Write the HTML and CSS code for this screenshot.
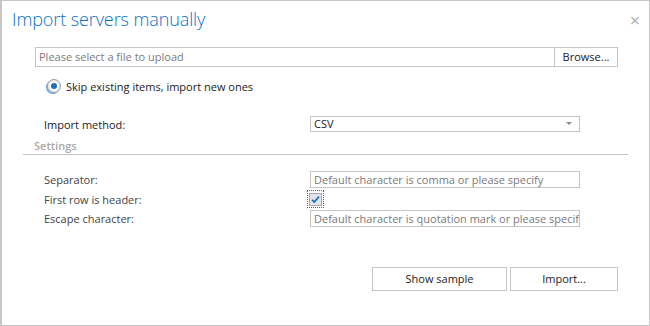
FILE: index.html
```html
<!doctype html>
<html>
<head>
<meta charset="utf-8">
<link rel="stylesheet" href="styles.css">
</head>
<body>
<div class="dialog">
  <div class="dialog-head">
    <h1 class="dialog-title">Import servers manually</h1>
    <span class="dialog-close">&#215;</span>
  </div>
  <div class="dialog-body">
    <div class="upload">
      <span class="upload-field">Please select a file to upload</span>
      <span class="upload-btn">Browse...</span>
    </div>
    <label class="radio-row">
      <span class="radio"><span class="radio-dot"></span></span>
      <span>Skip existing items, import new ones</span>
    </label>
    <div class="form-row method">
      <span class="form-label">Import method:</span>
      <span class="select">CSV<span class="select-arrow"></span></span>
    </div>
    <div class="section-head">Settings</div>
    <div class="settings">
      <div class="form-row">
        <span class="form-label">Separator:</span>
        <span class="text-field">Default character is comma or please specify</span>
      </div>
      <div class="form-row">
        <span class="form-label">First row is header:</span>
        <span class="check">
          <svg width="13" height="13" viewBox="0 0 13 13">
            <rect x="0.5" y="0.5" width="12" height="12" fill="#e4e4e4" stroke="#a8a8a8"/>
            <path d="M3 6.8 L5.3 9 L10 3.6" fill="none" stroke="#1a6fc4" stroke-width="1.8"/>
          </svg>
        </span>
      </div>
      <div class="form-row">
        <span class="form-label">Escape character:</span>
        <span class="text-field">Default character is quotation mark or please specif</span>
      </div>
    </div>
    <div class="actions">
      <span class="btn btn-sample">Show sample</span>
      <span class="btn btn-import">Import...</span>
    </div>
  </div>
</div>
</body>
</html>
```

FILE: styles.css
```css
body {
  margin: 0;
  font-family: "Open Sans", "Noto Sans", sans-serif;
  font-size: 11px;
  color: #333;
}
.dialog {
  box-sizing: border-box;
  width: 650px;
  height: 326px;
  border: 1px solid #c6c6c6;
  border-left-width: 2px;
  background: #fff;
}
/* titre */
.dialog-head {
  display: flex;
  justify-content: space-between;
  align-items: flex-start;
  height: 45px;
  padding: 0 9px 0 10px;
}
.dialog-title {
  margin: 6px 0 0 0;
  font-size: 18px;
  line-height: 24px;
  font-weight: 300;
  color: #0a72c4;
  letter-spacing: -0.1px;
}
.dialog-close {
  margin-top: 10px;
  font-size: 18px;
  color: #b0b0b0;
  line-height: 18px;
}
.dialog-body {
  padding: 0 21px;
}
/* upload */
.upload {
  display: flex;
  height: 20px;
  margin: 1px 10px 0 12px;
  border: 1px solid #c6c6c6;
  box-sizing: border-box;
}
.upload-field {
  flex: 1;
  padding-left: 3px;
  line-height: 18px;
  color: #7a7a7a;
}
.upload-btn {
  width: 62px;
  border-left: 1px solid #c6c6c6;
  text-align: center;
  line-height: 18px;
  color: #222;
}
.radio-row {
  display: flex;
  align-items: center;
  gap: 5px;
  margin: 11px 0 0 24px;
  height: 16px;
  color: #222;
}
.radio {
  box-sizing: border-box;
  width: 14px;
  height: 14px;
  border-radius: 50%;
  border: 1px solid #9a9a9a;
  background: radial-gradient(circle, #fff 40%, #d6d6d6 100%);
  display: flex;
  align-items: center;
  justify-content: center;
  box-shadow: -1px 1px 0 #5aa0e0;
}
.radio-dot {
  width: 6px;
  height: 6px;
  border-radius: 50%;
  background: #1a6fc4;
}
/* lignes du formulaire */
.form-row {
  display: grid;
  grid-template-columns: 266px 270px;
  align-items: center;
  padding-left: 21px;
  color: #222;
}
.method {
  margin-top: 22px;
}
.select {
  box-sizing: border-box;
  position: relative;
  height: 16px;
  border: 1px solid #c6c6c6;
  padding-left: 3px;
  line-height: 14px;
  color: #222;
}
.select-arrow {
  position: absolute;
  right: 7px;
  top: 5px;
  border-left: 3px solid transparent;
  border-right: 3px solid transparent;
  border-top: 3px solid #888;
}
.section-head {
  margin-top: 6px;
  padding: 0 0 1px 11px;
  border-bottom: 1px solid #c6c6c6;
  font-weight: 600;
  color: #a8a8a8;
}
.settings {
  display: flex;
  flex-direction: column;
  gap: 3px;
  margin-top: 16px;
}
.settings .form-row {
  color: #444;
}
.text-field {
  box-sizing: border-box;
  height: 17px;
  border: 1px solid #c6c6c6;
  padding-left: 3px;
  line-height: 15px;
  color: #7a7a7a;
  white-space: nowrap;
  overflow: hidden;
}
.check {
  display: flex;
  width: 15px;
  height: 16px;
  margin-left: -2px;
  align-items: center;
  justify-content: center;
  outline: 1px dotted #1a6fc4;
}
.check svg {
  display: block;
}
/* boutons */
.actions {
  display: flex;
  justify-content: flex-end;
  gap: 3px;
  margin: 40px 10px 0 0;
}
.btn {
  box-sizing: border-box;
  height: 24px;
  border: 1px solid #c6c6c6;
  text-align: center;
  line-height: 22px;
  color: #222;
}
.btn-sample {
  width: 135px;
}
.btn-import {
  width: 108px;
}
```
